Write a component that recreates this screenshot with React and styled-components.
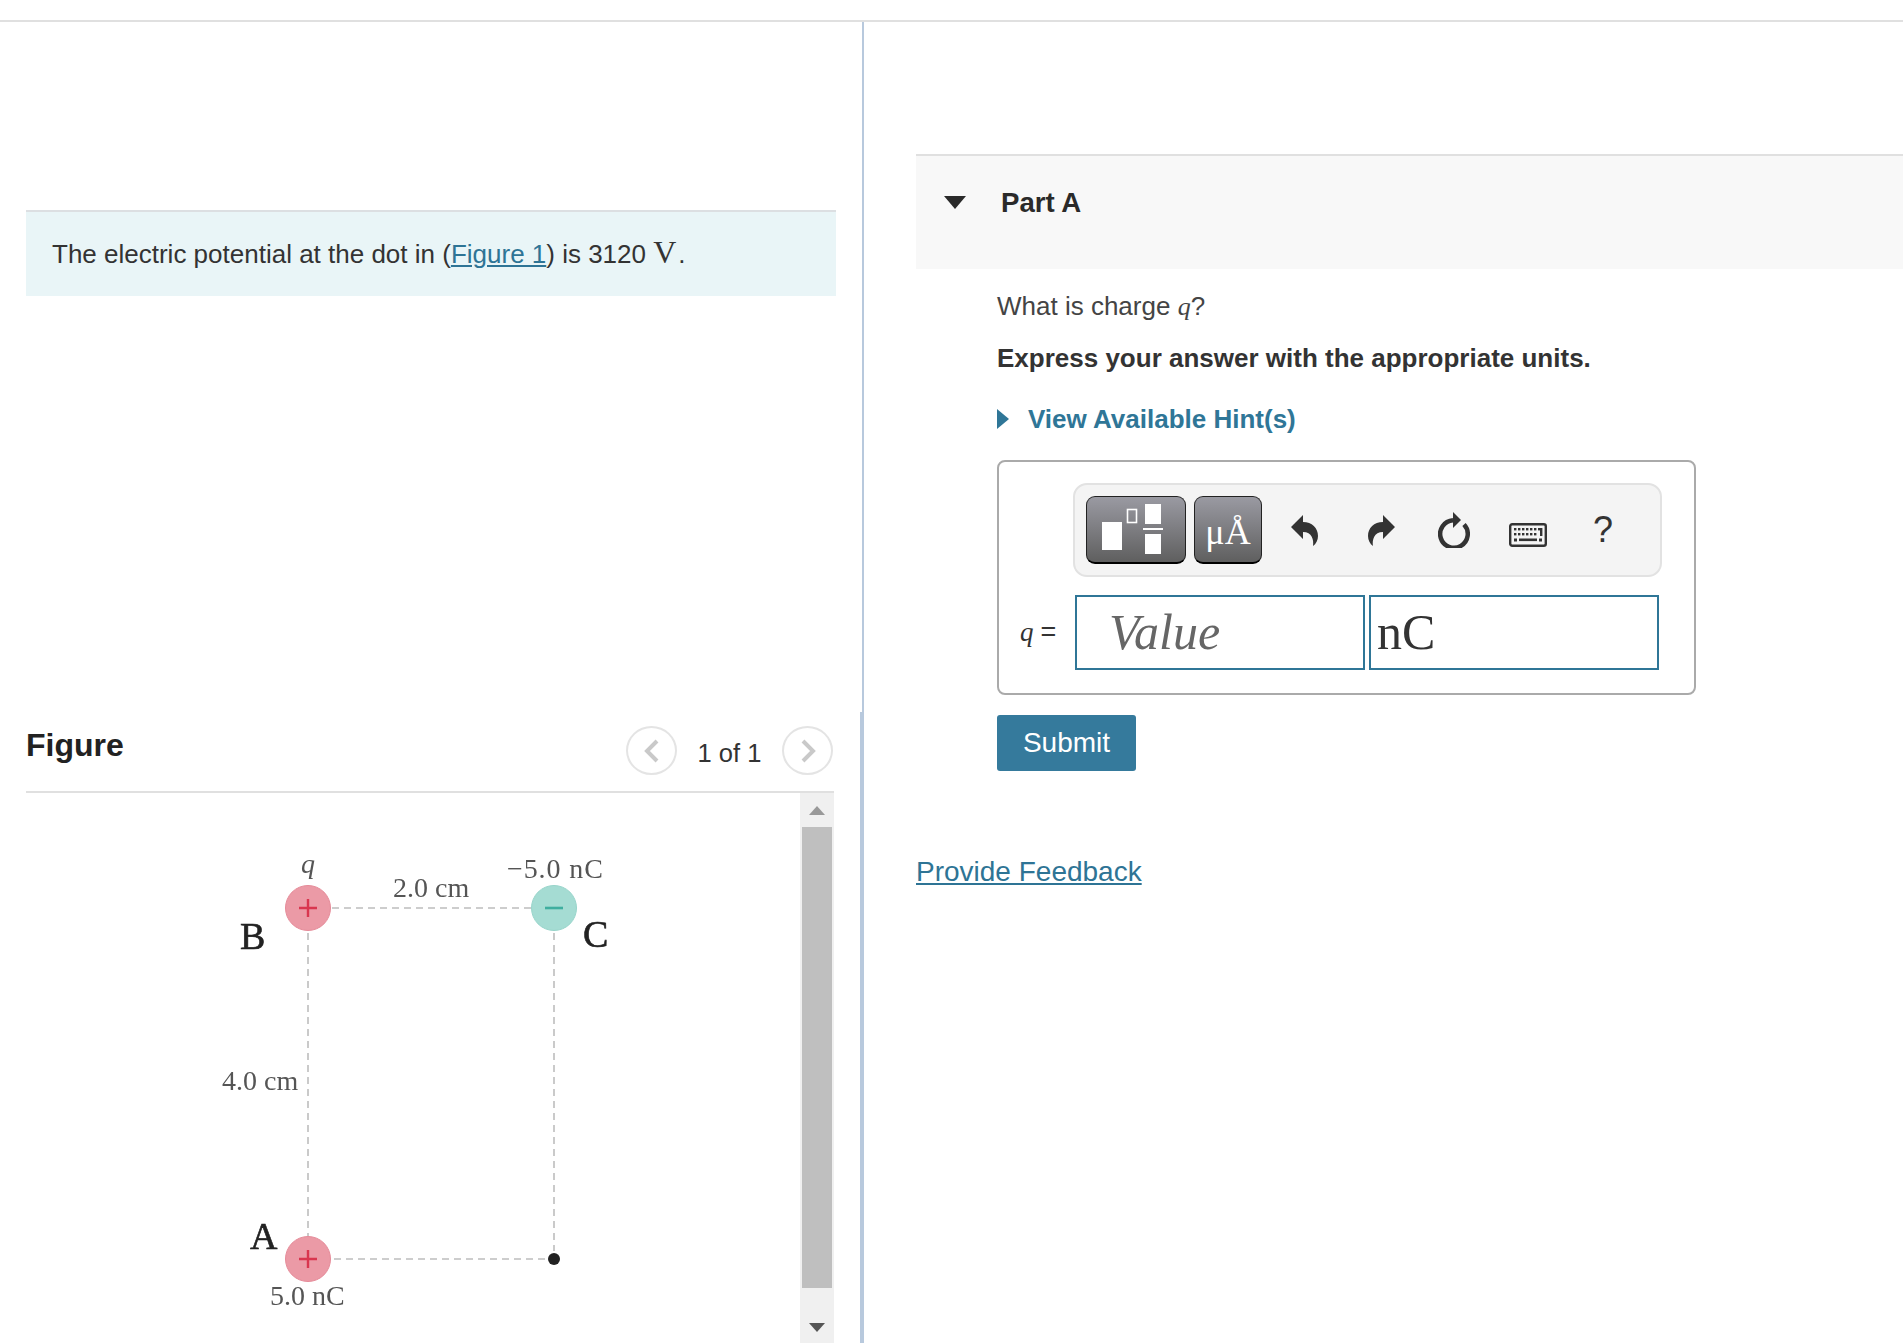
import React from "react";
import styled, { createGlobalStyle } from "styled-components";

const Global = createGlobalStyle`
  html, body { margin: 0; padding: 0; background: #fff; }
  body { font-family: "Liberation Sans", Arial, sans-serif; color: #333; }
`;

const Page = styled.div`
  width: 1903px;
  height: 1343px;
  overflow: hidden;
  padding-top: 20px;
  box-sizing: border-box;
`;
const Columns = styled.div`
  display: flex;
  height: 1323px;
  border-top: 2px solid #e0e0e0;
`;
const LeftColumn = styled.div`
  width: 864px;
  flex: none;
  display: flex;
  flex-direction: column;
`;
const ProblemSection = styled.section`
  height: 690px;
  box-sizing: border-box;
  padding: 188px 26px 0 26px;
  border-right: 2px solid #b8c9dd;
`;
const Statement = styled.div`
  width: 810px;
  height: 86px;
  box-sizing: border-box;
  border-top: 2px solid #dcdfe2;
  background: #e9f5f7;
  padding: 25px 26px 0;
  font-size: 26px;
  line-height: 30px;
`;
const Link = styled.a`
  color: #2e7495;
  text-decoration: underline;
`;
const MathUpright = styled.span`
  font-family: "Liberation Serif", serif;
  font-size: 32px;
  padding-right: 2px;
`;
const MathItalic = styled.i`
  font-family: "Liberation Serif", serif;
`;
const FigureSection = styled.section`
  flex: 1;
  min-height: 0;
  box-sizing: border-box;
  padding-left: 26px;
  padding-right: 26px;
  border-right: 4px solid #b8c9dd;
  display: flex;
  flex-direction: column;
`;
const FigureHeader = styled.div`
  height: 79px;
  flex: none;
  display: flex;
  align-items: center;
  justify-content: space-between;
  width: 808px;
`;
const FigureTitle = styled.h2`
  margin: 0 0 13px;
  font-size: 32px;
  font-weight: 700;
  color: #222;
`;
const Pager = styled.div`
  display: flex;
  align-items: center;
  margin-right: 1px;
  margin-bottom: 2px;
`;
const PagerButton = styled.div`
  width: 51px;
  height: 49px;
  box-sizing: border-box;
  border: 2px solid #e4e4e4;
  border-radius: 50%;
  display: flex;
  align-items: center;
  justify-content: center;
`;
const PagerLabel = styled.span`
  width: 105px;
  text-align: center;
  font-size: 25.5px;
  padding-top: 6px;
`;
const FigureBody = styled.div`
  flex: 1;
  min-height: 0;
  width: 808px;
  border-top: 2px solid #e0e0e0;
  display: flex;
`;
const Canvas = styled.svg`
  width: 774px;
  height: 551px;
  flex: none;
  filter: blur(0.45px);
`;
const ScrollTrack = styled.div`
  width: 34px;
  flex: none;
  background: #f0f0f0;
  display: flex;
  flex-direction: column;
  align-items: center;
`;
const ScrollEnd = styled.div`
  height: ${(p) => p.$h}px;
  flex: none;
  box-sizing: border-box;
  padding-top: ${(p) => p.$pad || 0}px;
  display: flex;
  align-items: center;
  justify-content: center;
`;
const ScrollThumb = styled.div`
  width: 30px;
  height: 461px;
  flex: none;
  background: #bfbfbf;
`;
const RightColumn = styled.div`
  flex: 1;
  min-width: 0;
  padding: 132px 0 0 52px;
`;
const PartHeader = styled.div`
  height: 115px;
  box-sizing: border-box;
  border-top: 2px solid #e0e0e0;
  background: #f8f8f8;
  display: flex;
  align-items: flex-start;
  padding: 29px 0 0 28px;
`;
const PartTitle = styled.h3`
  margin: 0 0 0 35px;
  font-size: 27.6px;
  line-height: 36px;
  font-weight: 700;
  color: #2a2a2a;
`;
const PartBody = styled.div`
  padding: 21px 0 0 81px;
`;
const Prompt = styled.p`
  margin: 0;
  font-size: 26px;
  line-height: 32px;
  color: ${(p) => (p.$strong ? "#333" : "#444")};
  font-weight: ${(p) => (p.$strong ? 700 : 400)};
  margin-top: ${(p) => p.$top || 0}px;
`;
const HintRow = styled.div`
  display: flex;
  align-items: center;
  margin-top: 29px;
  height: 32px;
  gap: 19px;
  color: #2f7697;
  font-size: 26px;
  font-weight: 700;
`;
const AnswerBox = styled.div`
  width: 699px;
  height: 235px;
  box-sizing: border-box;
  margin-top: 25px;
  border: 2px solid #aaa;
  border-radius: 8px;
  padding: 21px 0 0 74px;
`;
const Toolbar = styled.div`
  width: 589px;
  height: 94px;
  box-sizing: border-box;
  border: 2px solid #e2e2e2;
  border-radius: 14px;
  background: #f4f4f4;
  display: flex;
  align-items: flex-start;
  padding: 11px 0 0 11px;
`;
const ToolButton = styled.div`
  width: ${(p) => p.$w}px;
  height: 68px;
  margin-right: 8px;
  flex: none;
  box-sizing: border-box;
  border: 1px solid #222;
  border-bottom: 2px solid #000;
  border-radius: 9px;
  background: linear-gradient(#9a9aa2, #5f5f5f);
  display: flex;
  align-items: center;
  justify-content: center;
  color: #fff;
  font-family: "Liberation Serif", serif;
  font-size: 36px;
  line-height: 1;
  padding-top: ${(p) => p.$drop || 0}px;
`;
const IconSlot = styled.div`
  width: ${(p) => p.$w}px;
  flex: none;
  height: 68px;
  box-sizing: border-box;
  padding-top: ${(p) => p.$drop || 0}px;
  display: flex;
  justify-content: center;
  align-items: center;
  color: #333;
`;
const HelpMark = styled.span`
  font-size: 36px;
  color: #333;
`;
const InputRow = styled.div`
  display: flex;
  align-items: stretch;
  margin-top: 18px;
  margin-left: -53px;
`;
const InputLabel = styled.div`
  width: 55px;
  flex: none;
  display: flex;
  align-items: center;
  font-size: 27px;
  color: #333;
  gap: 7px;
`;
const Field = styled.div`
  height: 75px;
  width: ${(p) => p.$w}px;
  box-sizing: border-box;
  border: 2px solid #2f7697;
  background: #fff;
  font-family: "Liberation Serif", serif;
  font-size: 50px;
  line-height: 71px;
  padding-left: ${(p) => p.$pad}px;
  margin-right: 4px;
  flex: none;
  color: ${(p) => (p.$placeholder ? "#666" : "#333")};
  font-style: ${(p) => (p.$placeholder ? "italic" : "normal")};
`;
const SubmitButton = styled.button`
  display: block;
  margin-top: 20px;
  width: 139px;
  height: 56px;
  border: 0;
  border-radius: 3px;
  background: #357a9c;
  color: #fff;
  font-family: "Liberation Sans", Arial, sans-serif;
  font-size: 28px;
  padding: 0;
`;
const Feedback = styled.a`
  display: block;
  margin-top: 85px;
  color: #2e7495;
  text-decoration: underline;
  font-size: 28px;
  line-height: 32px;
`;
const TemplatesGlyph = styled.svg`
  margin-right: 6px;
`;
const ChevronDown = styled.svg`
  margin-top: 11px;
  flex: none;
`;

const Chevron = ({ dir }) => (
  <svg width="18" height="26" viewBox="0 0 18 26">
    <path
      d={dir === "left" ? "M14 3 L4 13 L14 23" : "M4 3 L14 13 L4 23"}
      fill="none"
      stroke="#c9c9c9"
      strokeWidth="4"
    />
  </svg>
);

const UndoIcon = ({ flip }) => (
  <svg width="27" height="31" viewBox="0 0 27 31">
    <path
      transform={flip ? "translate(27 0) scale(-1 1)" : undefined}
      d="M0 12 L12 0 V7 C21 7 27 13 27 21 C27 25 25 29 22 31 C23 25 21 17 12 17 V24 Z"
      fill="#333"
    />
  </svg>
);

const ReloadIcon = () => (
  <svg width="32" height="36" viewBox="0 0 32 36">
    <path d="M15 8.2 A13.8 13.8 0 1 0 26 12.5" fill="none" stroke="#333" strokeWidth="4.5" />
    <path d="M15 0 L23 8 L15 16 Z" fill="#333" />
  </svg>
);

const KeyboardIcon = () => {
  const keys = [];
  for (let i = 0; i < 7; i++) keys.push(<rect key={`a${i}`} x={5 + i * 4} y="5" width="2.4" height="2.4" />);
  for (let i = 0; i < 6; i++) keys.push(<rect key={`b${i}`} x={5 + i * 4} y="10" width="2.4" height="2.4" />);
  return (
    <svg width="38" height="24" viewBox="0 0 38 24">
      <rect x="1.2" y="1.2" width="35.6" height="21.6" rx="2" fill="none" stroke="#333" strokeWidth="2.4" />
      <g fill="#333">
        {keys}
        <rect x="31" y="5" width="2.4" height="8" />
        <rect x="5" y="15.5" width="3" height="3" />
        <rect x="10" y="15.5" width="18" height="2.6" />
        <rect x="30" y="15.5" width="3" height="3" />
      </g>
    </svg>
  );
};

const TemplatesIcon = () => (
  <TemplatesGlyph width="62" height="52" viewBox="0 0 62 52">
    <g fill="#fff">
      <rect x="0" y="18" width="20" height="28" />
      <rect x="25.5" y="5.5" width="9" height="13" fill="none" stroke="#fff" strokeWidth="1.6" />
      <rect x="43" y="0" width="16" height="20" />
      <rect x="41" y="24" width="20" height="2" />
      <rect x="43" y="30" width="16" height="20" />
    </g>
  </TemplatesGlyph>
);

const Charge = ({ cx, cy, fill, stroke, mark, r = 22.5 }) => (
  <g>
    <circle cx={cx} cy={cy} r={r} fill={fill} stroke={stroke} strokeWidth="1" />
    {mark === "+" ? (
      <path d={`M${cx - 9} ${cy}H${cx + 9}M${cx} ${cy - 9}V${cy + 9}`} stroke="#d9364f" strokeWidth="2.4" />
    ) : (
      <path d={`M${cx - 9} ${cy}H${cx + 9}`} stroke="#3fae9f" strokeWidth="2.6" />
    )}
  </g>
);

const FigureText = styled.text`
  font-family: "Liberation Serif", serif;
  font-size: ${(p) => p.$size}px;
  fill: ${(p) => p.$color};
  font-style: ${(p) => (p.$italic ? "italic" : "normal")};
  letter-spacing: ${(p) => p.$spread || 0}px;
`;
const PointLabel = styled.text`
  font-family: "Liberation Serif", serif;
  font-size: 38px;
  fill: #222;
  stroke: #222;
  stroke-width: 0.6px;
`;

const FigureDrawing = () => (
  <Canvas viewBox="26 792 774 551">
    <g stroke="#bdbdbd" strokeWidth="1.6" strokeDasharray="7 5" fill="none">
      <path d="M332 907H531" />
      <path d="M308 932V1235" />
      <path d="M554 932V1250" />
      <path d="M334 1258H548" />
    </g>
    <Charge cx={308} cy={907} fill="#eb9aa6" stroke="#e58a98" mark="+" />
    <Charge cx={554} cy={907} fill="#a5dcd3" stroke="#97d4ca" mark="-" />
    <Charge cx={308} cy={1258} fill="#eb9aa6" stroke="#e58a98" mark="+" />
    <circle cx={554} cy={1258} r="6" fill="#222" />
    <FigureText x={308} y={872} textAnchor="middle" $size={28} $color="#555" $italic>q</FigureText>
    <FigureText x={507} y={877} $size={28} $color="#555" $spread={0.9}>−5.0 nC</FigureText>
    <FigureText x={393} y={896} $size={28} $color="#555">2.0 cm</FigureText>
    <PointLabel x={240} y={948}>B</PointLabel>
    <PointLabel x={583} y={946}>C</PointLabel>
    <FigureText x={222} y={1089} $size={28} $color="#555">4.0 cm</FigureText>
    <PointLabel x={250} y={1248}>A</PointLabel>
    <FigureText x={270} y={1304} $size={28} $color="#555">5.0 nC</FigureText>
  </Canvas>
);

export default function App() {
  return (
    <Page>
      <Global />
      <Columns>
        <LeftColumn>
          <ProblemSection>
            <Statement>
              The electric potential at the dot in (<Link href="#">Figure 1</Link>) is 3120 <MathUpright>V</MathUpright>.
            </Statement>
          </ProblemSection>
          <FigureSection>
            <FigureHeader>
              <FigureTitle>Figure</FigureTitle>
              <Pager>
                <PagerButton><Chevron dir="left" /></PagerButton>
                <PagerLabel>1 of 1</PagerLabel>
                <PagerButton><Chevron dir="right" /></PagerButton>
              </Pager>
            </FigureHeader>
            <FigureBody>
              <FigureDrawing />
              <ScrollTrack>
                <ScrollEnd $h={34}>
                  <svg width="16" height="9" viewBox="0 0 16 9"><path d="M8 0L16 9H0Z" fill="#999" /></svg>
                </ScrollEnd>
                <ScrollThumb />
                <ScrollEnd $h={56} $pad={22}>
                  <svg width="16" height="9" viewBox="0 0 16 9"><path d="M0 0H16L8 9Z" fill="#555" /></svg>
                </ScrollEnd>
              </ScrollTrack>
            </FigureBody>
          </FigureSection>
        </LeftColumn>
        <RightColumn>
          <PartHeader>
            <ChevronDown width="22" height="13" viewBox="0 0 22 13"><path d="M0 0H22L11 13Z" fill="#2a2a2a" /></ChevronDown>
            <PartTitle>Part A</PartTitle>
          </PartHeader>
          <PartBody>
            <Prompt>What is charge <MathItalic>q</MathItalic>?</Prompt>
            <Prompt $strong $top={19}>Express your answer with the appropriate units.</Prompt>
            <HintRow>
              <svg width="12" height="20" viewBox="0 0 12 20"><path d="M0 0L12 10L0 20Z" fill="#2f7697" /></svg>
              <span>View Available Hint(s)</span>
            </HintRow>
            <AnswerBox>
              <Toolbar>
                <ToolButton $w={100}><TemplatesIcon /></ToolButton>
                <ToolButton $w={68} $drop={4}>μÅ</ToolButton>
                <IconSlot $w={69}><UndoIcon /></IconSlot>
                <IconSlot $w={85}><UndoIcon flip /></IconSlot>
                <IconSlot $w={60}><ReloadIcon /></IconSlot>
                <IconSlot $w={88} $drop={10}><KeyboardIcon /></IconSlot>
                <IconSlot $w={62}><HelpMark>?</HelpMark></IconSlot>
              </Toolbar>
              <InputRow>
                <InputLabel><MathItalic>q</MathItalic> =</InputLabel>
                <Field $w={290} $pad={32} $placeholder>Value</Field>
                <Field $w={290} $pad={6}>nC</Field>
              </InputRow>
            </AnswerBox>
            <SubmitButton>Submit</SubmitButton>
          </PartBody>
          <Feedback href="#">Provide Feedback</Feedback>
        </RightColumn>
      </Columns>
    </Page>
  );
}
